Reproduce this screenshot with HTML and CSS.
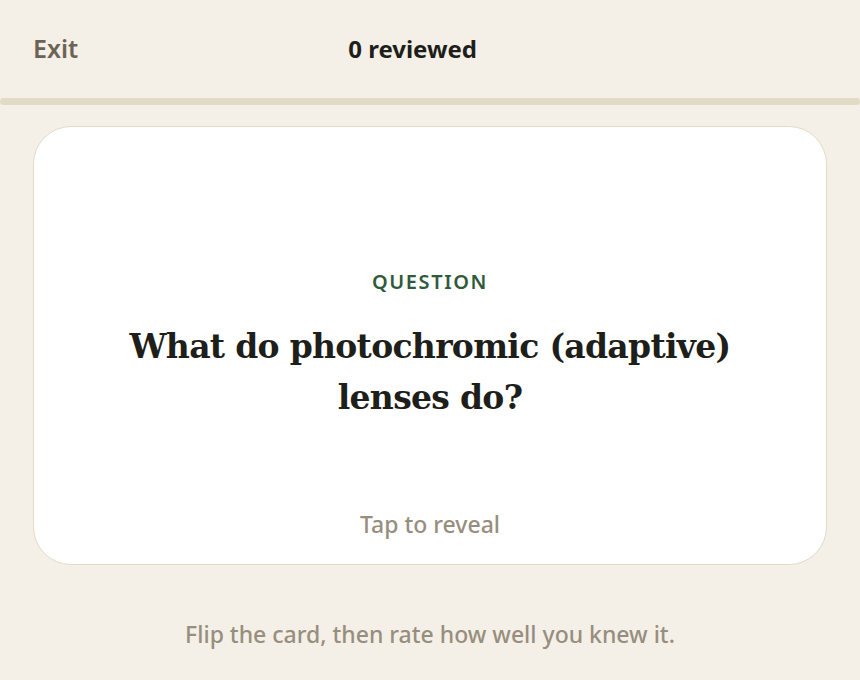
FILE: index.html
```html
<!DOCTYPE html>
<html lang="en">
<head>
  <meta charset="UTF-8" />
  <meta name="viewport" content="width=device-width, initial-scale=1.0"/>
  <title>Review</title>
  <link rel="stylesheet" href="styles.css">
</head>
<body>

  <header class="topbar">
    <button class="exit-btn">Exit</button>
    <div class="counter">0 reviewed</div>
    <div class="topbar-spacer"></div>
  </header>

  <div class="progress"><div class="progress-fill"></div></div>

  <main class="deck">
    <div class="flashcard">
      <div class="card-main">
        <div class="card-label">QUESTION</div>
        <h1 class="card-text">What do photochromic (adaptive) lenses do?</h1>
      </div>
      <div class="card-hint">Tap to reveal</div>
    </div>

    <p class="help-text">Flip the card, then rate how well you knew it.</p>
  </main>

</body>
</html>
```

FILE: styles.css
```css
body {
  margin: 0;
  background: #f4f0e8;
  font-family: 'Noto Sans', sans-serif;
  color: #1e1e1a;
}

.topbar {
  height: 98px;
  padding: 0 33px 2px;
  display: flex;
  align-items: center;
  justify-content: space-between;
  box-sizing: border-box;
}

.exit-btn {
  background: none;
  border: none;
  padding: 0;
  font-family: inherit;
  font-size: 25px;
  font-weight: 600;
  color: #6b6354;
  cursor: pointer;
}

.counter {
  font-size: 24px;
  font-weight: 700;
  color: #1e1e1a;
}

.topbar-spacer {
  width: 80px;
}

.progress {
  height: 7px;
  background: #e1dbc6;
  border-radius: 4px;
}

.progress-fill {
  width: 0;
  height: 100%;
}

.deck {
  padding: 21px 33px 0;
}

.flashcard {
  height: 439px;
  box-sizing: border-box;
  background: #fff;
  border: 1.5px solid #e2dbc8;
  border-radius: 38px;
  display: grid;
  grid-template-rows: 1fr auto 1fr;
  padding: 0 40px;
  text-align: center;
  cursor: pointer;
}

.card-main {
  grid-row: 2;
  max-width: 640px;
  margin: 0 auto;
}

.card-label {
  font-size: 20px;
  font-weight: 600;
  letter-spacing: 1.6px;
  color: #2f5a3b;
}

.card-text {
  margin: 26px 0 0;
  font-family: 'DejaVu Serif', serif;
  font-size: 33px;
  font-weight: 700;
  line-height: 51px;
  letter-spacing: -0.7px;
}

.card-hint {
  grid-row: 3;
  align-self: end;
  padding-bottom: 24px;
  font-size: 23px;
  font-weight: 500;
  color: #978e7e;
}

.help-text {
  margin: 53px 0 0;
  text-align: center;
  font-size: 23px;
  font-weight: 500;
  color: #978e7e;
}
```
